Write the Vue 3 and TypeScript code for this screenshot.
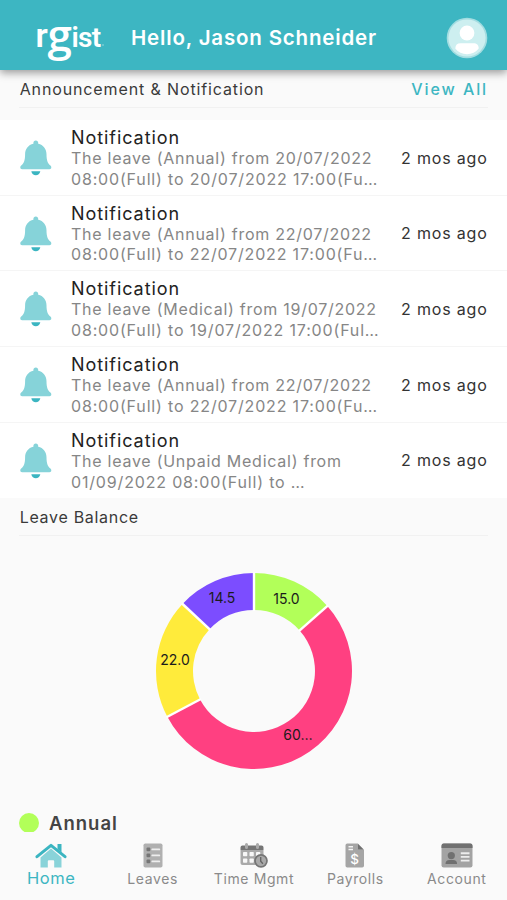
<script setup lang="ts">
interface Notice {
  lines: [string, string]
}

interface Slice {
  label: string
  value: number
  color: string
  x: number
  y: number
}

const notices: Notice[] = [
  { lines: ['The leave (Annual) from 20/07/2022', '08:00(Full) to 20/07/2022 17:00(Fu…'] },
  { lines: ['The leave (Annual) from 22/07/2022', '08:00(Full) to 22/07/2022 17:00(Fu…'] },
  { lines: ['The leave (Medical) from 19/07/2022', '08:00(Full) to 19/07/2022 17:00(Ful…'] },
  { lines: ['The leave (Annual) from 22/07/2022', '08:00(Full) to 22/07/2022 17:00(Fu…'] },
  { lines: ['The leave (Unpaid Medical) from', '01/09/2022 08:00(Full) to …'] },
]

const slices: Slice[] = [
  { label: '15.0', value: 15, color: '#b2ff59', x: 132.5, y: 32.5 },
  { label: '60…', value: 60, color: '#ff4081', x: 144, y: 169 },
  { label: '22.0', value: 22, color: '#ffeb3b', x: 21, y: 93.5 },
  { label: '14.5', value: 14.5, color: '#7c4dff', x: 68, y: 31.5 },
]

const OUTER = 98
const INNER = 61
const CENTER = 100

function point(radius: number, angle: number): string {
  return `${(CENTER + radius * Math.sin(angle)).toFixed(2)} ${(CENTER - radius * Math.cos(angle)).toFixed(2)}`
}

const total = slices.reduce((sum, s) => sum + s.value, 0)
let start = 0
const arcs = slices.map((s) => {
  const end = start + (s.value / total) * Math.PI * 2
  const large = end - start > Math.PI ? 1 : 0
  const d = `M${point(OUTER, start)}A${OUTER} ${OUTER} 0 ${large} 1 ${point(OUTER, end)}L${point(INNER, end)}A${INNER} ${INNER} 0 ${large} 0 ${point(INNER, start)}Z`
  const divider = `M${point(INNER - 1, start)}L${point(OUTER + 1, start)}`
  start = end
  return { ...s, d, divider }
})
</script>

<template>
  <div class="screen">
    <header class="bar">
      <svg class="logo" width="72" height="48" viewBox="0 0 72 48" role="img" aria-label="rgist">
        <text><tspan class="logo-r" x="-1.500" y="29.500">r</tspan><tspan class="logo-g" x="10.500" y="34">g</tspan><tspan class="logo-ist" x="34.500" y="29.500">ist</tspan></text>
        <circle cx="66" cy="28" r="0.8" fill="#fff" opacity="0.5" />
      </svg>
      <h1 class="hello">Hello, Jason Schneider</h1>
      <svg class="avatar" width="42" height="42" viewBox="0 0 42 42">
        <circle cx="21" cy="21" r="20.3" fill="#a3dde1" />
        <circle cx="21" cy="21" r="18.6" fill="#cdeff0" />
        <circle cx="21" cy="16" r="7.4" fill="#fff" />
        <path d="M9.3 31.5c0-3.5 2-5.3 5.2-5.3h13c3.200 0 5.200 1.800 5.200 5.300-2.800 3.700-7 5.700-11.700 5.700s-8.900-2-11.700-5.700z" fill="#fff" />
      </svg>
    </header>

    <main class="content">
      <section class="heading announcements">
        <h2>Announcement &amp; Notification</h2>
        <a class="view-all">View All</a>
      </section>

      <ul class="notices">
        <li v-for="(n, i) in notices" :key="i" class="notice">
          <svg class="bell" width="32" height="36" viewBox="0 0 32 36">
            <path d="M15.800 .500c1.500 0 2.400 1 2.400 2.300v1c5.100 1.100 8.300 5.200 8.300 10.500 0 6.300 1.300 9 3.900 11.300.8.700.9 1.300.9 1.900 0 1-.7 1.700-1.800 1.700H2.100c-1.100 0-1.800-.7-1.800-1.700 0-.6.100-1.200.9-1.900 2.600-2.300 3.900-5 3.900-11.300 0-5.300 3.200-9.400 8.300-10.500v-1C13.400 1.500 14.300.5 15.800.5z" fill="#86d3d9" />
            <path d="M11.300 31.300h9c-.5 2.400-2.300 4-4.500 4s-4-1.600-4.500-4z" fill="#3bb5c1" />
          </svg>
          <div class="body">
            <h3>Notification</h3>
            <p v-for="line in n.lines" :key="line">{{ line }}</p>
          </div>
          <time>2 mos ago</time>
        </li>
      </ul>

      <section class="heading balance">
        <h2>Leave Balance</h2>
      </section>

      <div class="chart">
        <svg width="200" height="200" viewBox="0 0 200 200">
          <path v-for="a in arcs" :key="a.label" :d="a.d" :fill="a.color" />
          <path v-for="a in arcs" :key="a.color" :d="a.divider" stroke="#fff" stroke-width="2.4" />
          <text v-for="a in arcs" :key="a.x" :x="a.x" :y="a.y" class="value">{{ a.label }}</text>
        </svg>
      </div>

      <div class="legend">
        <span class="dot"></span>
        <span class="name">Annual</span>
      </div>
    </main>

    <nav class="tabs">
      <a class="tab active">
        <svg width="32" height="25" viewBox="0 0 32 25">
          <path d="M5.500 14.500 16 5.500l10.500 9V24.500h-7.300v-6.200a1 1 0 0 0-1-1h-4.400a1 1 0 0 0-1 1v6.200H5.500z" fill="#89d3d9" />
          <path d="M22.500 1h4v8.500l-4-3.500z" fill="#3bb5c1" />
          <path d="M2 13.700 16 2.400l14 11.300" fill="none" stroke="#3bb5c1" stroke-width="3" stroke-linecap="round" stroke-linejoin="round" />
        </svg>
        <span>Home</span>
      </a>
      <a class="tab">
        <svg width="20" height="25" viewBox="0 0 20 25">
          <rect x="0.500" y="0.500" width="19" height="24" rx="1.800" fill="#b0b0b0" />
          <g fill="#757575">
            <rect x="3.500" y="4.500" width="3.800" height="3.800" rx="1" />
            <rect x="3.500" y="10.500" width="3.800" height="3.800" rx="1" />
            <rect x="3.500" y="16.500" width="3.800" height="3.800" rx="1" />
          </g>
          <path d="M9.300 6.400h7M9.300 12.400h7M9.300 18.400h7" stroke="#eee" stroke-width="1.800" stroke-linecap="round" />
        </svg>
        <span>Leaves</span>
      </a>
      <a class="tab">
        <svg width="28" height="25" viewBox="0 0 28 25">
          <path d="M0.500 7h23v15H2.500a2 2 0 0 1-2-2z" fill="#a9a9a9" />
          <path d="M.5 7V4.500a2 2 0 0 1 2-2h19a2 2 0 0 1 2 2V7z" fill="#757575" />
          <path d="M6.500 1.500v3M17.500 1.500v3" stroke="#aaa" stroke-width="3" stroke-linecap="round" />
          <g fill="#f7f7f7">
            <rect x="3" y="9" width="4.300" height="4.300" rx=".7" />
            <rect x="9.500" y="9" width="4.300" height="4.300" rx=".7" />
            <rect x="16" y="9" width="4.300" height="4.300" rx=".7" />
            <rect x="3" y="15.500" width="4.300" height="4.300" rx=".7" />
            <rect x="9.500" y="15.500" width="4.300" height="4.300" rx=".7" />
          </g>
          <circle cx="21" cy="17.800" r="6" fill="#a9a9a9" stroke="#757575" stroke-width="1.700" />
          <path d="M20.700 14v4.300l2.200 2.400" fill="none" stroke="#666" stroke-width="1.400" />
        </svg>
        <span>Time Mgmt</span>
      </a>
      <a class="tab">
        <svg width="20" height="25" viewBox="0 0 20 25">
          <path d="M2.300.5h10.700v6.500h6V22.700a1.800 1.800 0 0 1-1.800 1.800H2.300A1.800 1.800 0 0 1 .5 22.700V2.300A1.800 1.800 0 0 1 2.300.5z" fill="#a5a5a5" />
          <path d="M13 .7 19 6.700H13z" fill="#707070" />
          <path d="M3.500 3.800h4.500M3.500 6.500h4.500" stroke="#f3f3f3" stroke-width="1.500" />
          <text class="dollar" x="10" y="20.700">$</text>
        </svg>
        <span>Payrolls</span>
      </a>
      <a class="tab">
        <svg width="32" height="25" viewBox="0 0 32 25">
          <rect x=".5" y=".5" width="31" height="24" rx="2.200" fill="#a3a3a3" />
          <path d="M.5 5V2.700A2.200 2.200 0 0 1 2.700.5h26.600a2.200 2.200 0 0 1 2.200 2.200V5z" fill="#707070" />
          <circle cx="10.300" cy="12.600" r="3.600" fill="#707070" />
          <path d="M4.500 21c0-2.600 1.400-4 4-4h3.600c2.600 0 4 1.400 4 4z" fill="#707070" />
          <path d="M19.800 10.200h8.700M19.800 13.900h8.700M19.800 17.600h8.700" stroke="#ededed" stroke-width="1.900" />
        </svg>
        <span>Account</span>
      </a>
    </nav>
  </div>
</template>

<style>
body {
  margin: 0;
}
</style>

<style scoped>
.screen {
  width: 507px;
  height: 900px;
  display: flex;
  flex-direction: column;
  overflow: hidden;
  background: #fafafa;
  font-family: Inter, 'Liberation Sans', sans-serif;
  color: #3a3a3a;
}

h1,
h2,
h3,
p,
ul {
  margin: 0;
  padding: 0;
  font-weight: 400;
}

.bar {
  position: relative;
  z-index: 1;
  flex: none;
  height: 70px;
  box-sizing: border-box;
  display: flex;
  align-items: flex-start;
  padding: 17px 19px 0 37px;
  background: #3db6c2;
  box-shadow: 0 3px 8px rgba(0, 0, 0, 0.38);
}

.logo {
  flex: none;
  overflow: visible;
  fill: #fff;
}

.logo-r {
  font: 600 34px Roboto, sans-serif;
}

.logo-g {
  font: 600 44px 'Open Sans', sans-serif;
}

.logo-ist {
  font: 600 28px Roboto, sans-serif;
  letter-spacing: -0.7px;
}

.hello {
  margin-left: 22px;
  font-size: 20.500px;
  line-height: 42px;
  font-weight: 600;
  letter-spacing: 0.82px;
  color: #fff;
  white-space: nowrap;
}

.avatar {
  flex: none;
  margin-left: auto;
}

.content {
  flex: none;
  height: 762px;
  overflow: hidden;
}

.heading {
  display: flex;
  justify-content: space-between;
  box-sizing: border-box;
  margin: 0 19px;
  border-bottom: 1px solid #f1f1f1;
  line-height: 20px;
}

.heading h2 {
  padding-left: 0.7px;
  font-size: 16px;
  letter-spacing: 0.7px;
}

.announcements {
  height: 38px;
  padding-top: 9px;
}

.announcements h2 {
  letter-spacing: 0.87px;
}

.view-all {
  font-size: 16px;
  font-weight: 500;
  letter-spacing: 1.9px;
  color: #3db6c2;
}

.notices {
  margin-top: 12px;
  list-style: none;
}

.notice {
  height: 75.700px;
  box-sizing: border-box;
  display: flex;
  padding: 7px 19px 0 20px;
  background: #fff;
  border-bottom: 1.500px solid #f5f5f5;
}

.notice:last-child {
  border-bottom: 0;
}

.bell {
  flex: none;
  margin-top: 13px;
}

.body {
  flex: none;
  width: 330px;
  margin-left: 19px;
  white-space: nowrap;
}

.body h3 {
  font-size: 18px;
  line-height: 21px;
  letter-spacing: 0.93px;
  color: #222;
}

.body p {
  font-size: 16px;
  line-height: 20.800px;
  letter-spacing: 0.74px;
  color: #868686;
}

.body p:last-child {
  letter-spacing: 0.83px;
}

time {
  margin-top: 20.500px;
  font-size: 16px;
  line-height: 20px;
  letter-spacing: 0.83px;
  color: #333;
  white-space: nowrap;
}

.balance {
  height: 38px;
  padding-top: 9px;
}

.chart {
  display: flex;
  justify-content: center;
  margin-top: 35px;
  padding-left: 1px;
}

.value {
  font-size: 14px;
  text-anchor: middle;
  fill: #1b1b1b;
}

.legend {
  display: flex;
  align-items: center;
  margin: 40px 19px 0;
  height: 24px;
}

.dot {
  width: 20px;
  height: 20px;
  border-radius: 50%;
  background: #b2ff59;
}

.name {
  margin-left: 10px;
  font-size: 18.500px;
  line-height: 20px;
  font-weight: 600;
  letter-spacing: 1px;
  color: #444;
}

.tabs {
  flex: none;
  height: 68px;
  display: grid;
  grid-template-columns: repeat(5, 1fr);
  background: #fafafa;
}

.tab {
  display: flex;
  flex-direction: column;
  align-items: center;
  padding-top: 11px;
  padding-left: 1px;
  font-size: 14px;
  line-height: 20px;
  letter-spacing: 0.6px;
  color: #8a8a8a;
  white-space: nowrap;
}

.tab span {
  margin-top: 1px;
}

.tab.active {
  font-size: 16.500px;
  color: #3db6c2;
}

.tab.active span {
  margin-top: 0;
}

.dollar {
  font: 500 13.500px Inter, sans-serif;
  text-anchor: middle;
  fill: #fff;
}
</style>
